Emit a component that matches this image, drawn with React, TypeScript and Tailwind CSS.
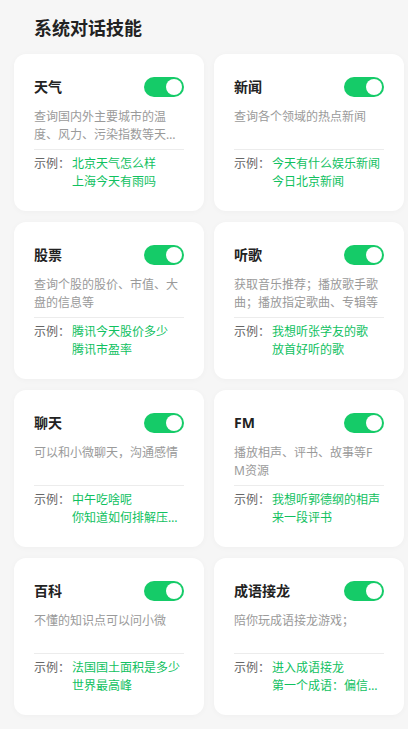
type Skill = {
  name: string
  desc: string
  examples: string[]
}

const skills: Skill[] = [
  { name: '天气', desc: '查询国内外主要城市的温度、风力、污染指数等天气信息', examples: ['北京天气怎么样', '上海今天有雨吗'] },
  { name: '新闻', desc: '查询各个领域的热点新闻', examples: ['今天有什么娱乐新闻', '今日北京新闻'] },
  { name: '股票', desc: '查询个股的股价、市值、大盘的信息等', examples: ['腾讯今天股价多少', '腾讯市盈率'] },
  { name: '听歌', desc: '获取音乐推荐；播放歌手歌曲；播放指定歌曲、专辑等', examples: ['我想听张学友的歌', '放首好听的歌'] },
  { name: '聊天', desc: '可以和小微聊天，沟通感情', examples: ['中午吃啥呢', '你知道如何排解压力吗'] },
  { name: 'FM', desc: '播放相声、评书、故事等FM资源', examples: ['我想听郭德纲的相声', '来一段评书'] },
  { name: '百科', desc: '不懂的知识点可以问小微', examples: ['法国国土面积是多少', '世界最高峰'] },
  { name: '成语接龙', desc: '陪你玩成语接龙游戏；', examples: ['进入成语接龙', '第一个成语：偏信则暗'] },
]

function Toggle() {
  return (
    <div className="w-10 h-5 rounded-full bg-[#15cb68] flex items-center justify-end p-[2px]">
      <div className="w-4 h-4 rounded-full bg-white" />
    </div>
  )
}

function SkillCard({ skill }: { skill: Skill }) {
  return (
    <div className="bg-white rounded-xl pt-[23px] px-5 pb-5 shadow-[0_1px_6px_rgba(0,0,0,0.03)]">
      <div className="flex items-center justify-between h-5">
        <span className="text-sm font-bold text-[#222]">{skill.name}</span>
        <Toggle />
      </div>

      <p className="mt-[11px] h-9 w-[147px] text-xs leading-[18px] text-[#9a9a9a] break-all line-clamp-2">
        {skill.desc}
      </p>

      <div className="mt-[5px] border-t border-[#ececec]" />

      <div className="mt-[5px] flex text-xs leading-[18px]">
        <span className="w-[38px] shrink-0 text-[#666]">示例：</span>
        <div className="min-w-0 flex-1 text-[#10c15f]">
          {skill.examples.map(ex => (
            <div key={ex} className="truncate">{ex}</div>
          ))}
        </div>
      </div>
    </div>
  )
}

export default function App() {
  return (
    <div
      className="w-[408px] min-h-[729px] bg-[#f6f6f6] pl-[14px] pr-1"
      style={{ fontFamily: '"Noto Sans", "Noto Sans CJK SC", sans-serif' }}
    >
      <h1 className="h-[54px] pt-[15px] pl-5 text-lg leading-[26px] font-bold text-[#222]">
        系统对话技能
      </h1>

      <div className="grid grid-cols-[190px_190px] gap-x-[10px] gap-y-[11px] pb-[14px]">
        {skills.map(s => (
          <SkillCard key={s.name} skill={s} />
        ))}
      </div>
    </div>
  )
}
